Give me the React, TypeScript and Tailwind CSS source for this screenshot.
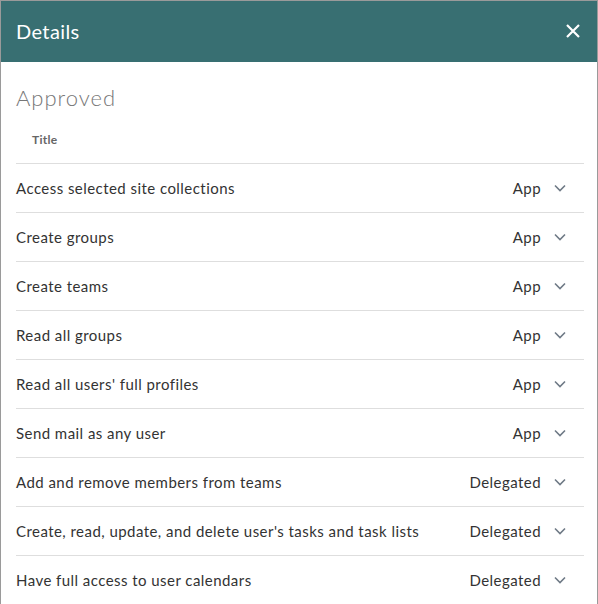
const permissions = [
  { title: "Access selected site collections", type: "App" },
  { title: "Create groups", type: "App" },
  { title: "Create teams", type: "App" },
  { title: "Read all groups", type: "App" },
  { title: "Read all users' full profiles", type: "App" },
  { title: "Send mail as any user", type: "App" },
  { title: "Add and remove members from teams", type: "Delegated" },
  { title: "Create, read, update, and delete user's tasks and task lists", type: "Delegated" },
  { title: "Have full access to user calendars", type: "Delegated" },
];

const Chevron = () => (
  <svg width="12" height="8" viewBox="0 0 12 8" fill="none" className="text-[#6f7a86]">
    <path d="M1 1.5l5 5 5-5" stroke="currentColor" strokeWidth="1.6" />
  </svg>
);

const App = () => {
  return (
    <div className="w-[598px] h-[604px] overflow-hidden bg-white border border-b-0 border-[#9a9a9a] font-['Lato',sans-serif]">
      {/* Header */}
      <div className="h-[61px] bg-[#386f72] flex items-center justify-between pl-[15px] pr-[17px] pb-[2px]">
        <h1 className="text-white text-[20px] leading-none tracking-[0.4px]">Details</h1>
        <button className="text-white">
          <svg width="14" height="14" viewBox="0 0 14 14">
            <path d="M1 1l12 12M13 1L1 13" stroke="currentColor" strokeWidth="2.2" />
          </svg>
        </button>
      </div>

      {/* Body */}
      <div className="pl-[15px] pr-[13px]">
        <h2 className="pt-[21px] text-[22px] leading-[30px] text-[#777] font-light tracking-[1px]">Approved</h2>
        <div className="mt-[19px] pl-4 pb-[15px] text-[12px] leading-4 font-bold text-[#666] tracking-[0.3px]">Title</div>
        <ul>
          {permissions.map((p) => (
            <li
              key={p.title}
              className="h-[49px] border-t border-[#dedede] flex items-center justify-between pr-[18px] text-[15px] text-[#333] tracking-[0.45px]"
            >
              <span>{p.title}</span>
              <span className="flex items-center gap-[13px]">
                <span>{p.type}</span>
                <Chevron />
              </span>
            </li>
          ))}
        </ul>
      </div>
    </div>
  );
};

export default App;
